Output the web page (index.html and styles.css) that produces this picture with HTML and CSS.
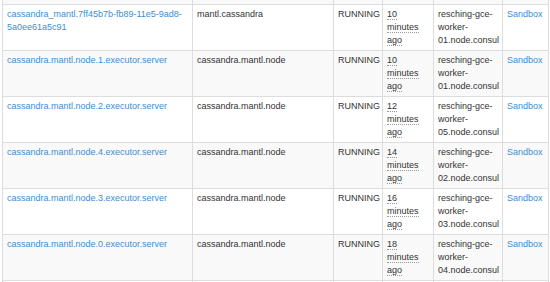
FILE: index.html
```html
<!DOCTYPE html>
<html lang="en">
<head>
    <meta charset="UTF-8">
    <title>Tasks</title>
    <link rel="stylesheet" href="styles.css">
</head>
<body>
    <table class="tasks">
        <colgroup>
            <col class="c-id">
            <col class="c-name">
            <col class="c-state">
            <col class="c-time">
            <col class="c-host">
            <col class="c-link">
        </colgroup>
        <tbody>
            <tr class="cut">
                <td></td><td></td><td></td><td></td><td></td><td></td>
            </tr>
            <tr>
                <td><a href="#">cassandra_mantl.7ff45b7b-fb89-11e5-9ad8-5a0ee61a5c91</a></td>
                <td>mantl.cassandra</td>
                <td>RUNNING</td>
                <td class="time"><abbr>10 minutes ago</abbr></td>
                <td>resching-gce-worker-01.node.consul</td>
                <td><a href="#">Sandbox</a></td>
            </tr>
            <tr>
                <td><a href="#">cassandra.mantl.node.1.executor.server</a></td>
                <td>cassandra.mantl.node</td>
                <td>RUNNING</td>
                <td class="time"><abbr>10 minutes ago</abbr></td>
                <td>resching-gce-worker-01.node.consul</td>
                <td><a href="#">Sandbox</a></td>
            </tr>
            <tr>
                <td><a href="#">cassandra.mantl.node.2.executor.server</a></td>
                <td>cassandra.mantl.node</td>
                <td>RUNNING</td>
                <td class="time"><abbr>12 minutes ago</abbr></td>
                <td>resching-gce-worker-05.node.consul</td>
                <td><a href="#">Sandbox</a></td>
            </tr>
            <tr>
                <td><a href="#">cassandra.mantl.node.4.executor.server</a></td>
                <td>cassandra.mantl.node</td>
                <td>RUNNING</td>
                <td class="time"><abbr>14 minutes ago</abbr></td>
                <td>resching-gce-worker-02.node.consul</td>
                <td><a href="#">Sandbox</a></td>
            </tr>
            <tr>
                <td><a href="#">cassandra.mantl.node.3.executor.server</a></td>
                <td>cassandra.mantl.node</td>
                <td>RUNNING</td>
                <td class="time"><abbr>16 minutes ago</abbr></td>
                <td>resching-gce-worker-03.node.consul</td>
                <td><a href="#">Sandbox</a></td>
            </tr>
            <tr>
                <td><a href="#">cassandra.mantl.node.0.executor.server</a></td>
                <td>cassandra.mantl.node</td>
                <td>RUNNING</td>
                <td class="time"><abbr>18 minutes ago</abbr></td>
                <td>resching-gce-worker-04.node.consul</td>
                <td><a href="#">Sandbox</a></td>
            </tr>
            <tr class="next">
                <td></td><td></td><td></td><td></td><td></td><td></td>
            </tr>
        </tbody>
    </table>
</body>
</html>
```

FILE: styles.css
```css
body {
    margin: 0;
    background-color: #fff;
    font-family: "Liberation Sans", Arial, sans-serif;
    font-size: 9px;
    line-height: 13px;
    color: #333;
    overflow: hidden;
}
.tasks {
    margin-left: 2px;
    width: 547px;
    table-layout: fixed;
    border-collapse: collapse;
}
.c-id { width: 190px; }
.c-name { width: 141px; }
.c-state { width: 49px; }
.c-time { width: 51px; }
.c-host { width: 69px; }
.tasks td {
    border: 1px solid #ddd;
    padding: 3px 0 3px 4px;
    vertical-align: top;
}
.tasks td.time {
    padding-right: 10px;
}
.tasks tr:nth-child(odd) td {
    background-color: #f9f9f9;
}
.tasks tr.cut td {
    height: 4px;
    padding: 0;
    border-top: none;
}
.tasks tr.next td {
    height: 20px;
    padding: 0;
}
.tasks a {
    color: #3b8ed6;
    text-decoration: none;
}
.tasks abbr {
    text-decoration: none;
    border-bottom: 1px dotted #999;
}
```
